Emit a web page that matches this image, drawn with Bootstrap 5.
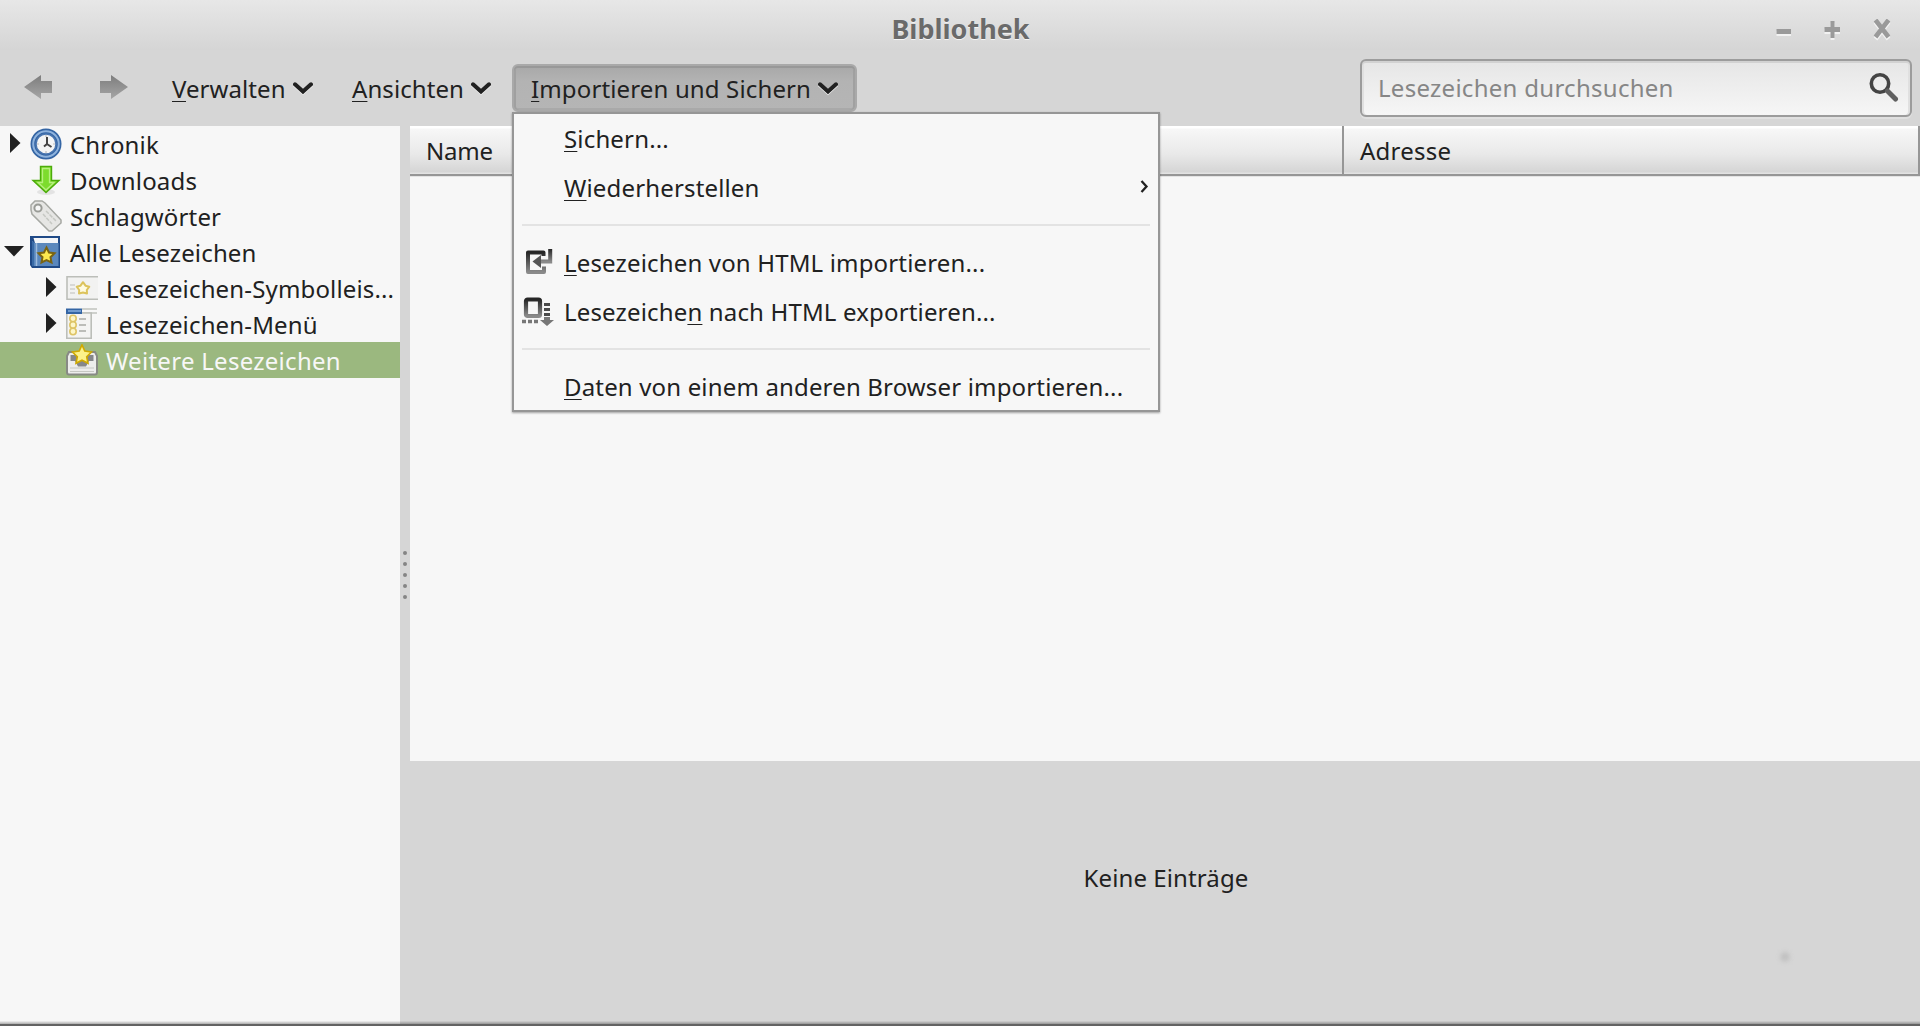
<!DOCTYPE html>
<html lang="de">
<head>
<meta charset="utf-8">
<title>Bibliothek</title>
<link href="https://cdn.jsdelivr.net/npm/bootstrap@5.3.0/dist/css/bootstrap.min.css" rel="stylesheet">
<style>
html,body{height:100%}
body{font-family:"Noto Sans","Open Sans",sans-serif;font-size:24px;line-height:36px;color:#212121;background:#d6d6d6;overflow:hidden}
svg{display:block;flex:none}
u{text-decoration:underline;text-decoration-thickness:1px;text-underline-offset:3px;text-decoration-skip-ink:none}
.titlebar{height:50px;background:linear-gradient(#e7e7e7,#d5d5d5);padding-left:52px;padding-right:29px}
.window-title{font-size:27px;font-weight:700;color:#6a6a6a;text-shadow:0 1px #f4f4f4;padding-top:11px;padding-left:94px}
.window-controls{gap:33px;padding-top:19px}
.window-controls svg{filter:drop-shadow(0 2px 0 #f2f2f2)}
.chev{filter:drop-shadow(0 1px 0 #eee)}
.toolbar{height:76px;padding:9px 8px 0 24px}
.nav-arrow{margin-top:16px}
.tool-btn{height:48px;margin-top:5px;border:0;border-radius:6px;padding:0;font-size:24px;line-height:36px;color:#212121;gap:7px;letter-spacing:.08px}
.tool-btn>span{padding-top:2px}
.tool-btn.active-menu{width:345px;padding-left:17px;letter-spacing:.14px;border:2px solid #a9a9a9;background:linear-gradient(#a8a8a8,#b3b3b3 35%,#b5b5b5);box-shadow:inset 0 2px #989898,inset 2px 0 #a0a0a0,inset -2px 0 #a0a0a0,inset 0 -2px #a9a9a9}
.searchbox{width:552px;height:58px;border:2px solid #9c9c9c;border-radius:6px;background:linear-gradient(#e6e6e6,#f6f6f6);box-shadow:inset 0 2px #d2d2d2,inset 2px 0 #e0e0e0,inset -2px 0 #e0e0e0,0 2px #e0e0e0;padding:0 11px 0 16px}
.searchbox input{font-size:24px;letter-spacing:.28px;color:#868686;background:none;border:0;padding:0;outline:0;line-height:36px}
.searchbox input::placeholder{color:#868686;opacity:1}
.sidebar{width:400px;background:#f7f7f7}
.tree-row{height:36px;padding-left:4px;white-space:nowrap;letter-spacing:.15px}
.tree-text{padding-top:2px}
.twisty{width:20px;margin:0 6px 2px 0;flex:none}
.tree-row.nested{padding-left:40px}
.tree-icon{width:32px;margin-right:8px}
.tree-row.chosen{background:#9bb87f;color:#f7f7f7;letter-spacing:.28px}
.splitter{width:10px;padding-top:425px;gap:7px}
.splitter i{width:4px;height:4px;border-radius:50%;background:#858585}
.listing{height:635px;background:#f7f7f7}
.list-head{height:50px;background:linear-gradient(#fff 2px,#f7f7f7 3px,#e9e9e9 28px,#d5d5d5 46px,#e2e2e2 47px);border-bottom:2px solid #969696;box-shadow:0 1px #e3e3e3;padding-bottom:1px}
.head-cell{height:48px;padding:7px 16px 5px;border-right:2px solid #969696}
.head-name{width:934px;letter-spacing:-.2px}
.head-url{letter-spacing:.25px}
.details-pane{position:relative}
.empty-note{padding:99px 0 0 2px;letter-spacing:.1px}
.resize-dot{position:absolute;left:1370px;top:191px;width:10px;height:10px;border-radius:50%;background:#c2c2c2;filter:blur(2px)}
.drop-panel{position:absolute;left:512px;top:112px;width:648px;height:300px;background:#f7f7f7;border:2px solid #969696;box-shadow:0 1px 2px rgba(0,0,0,.35);letter-spacing:.16px}
.drop-row{height:49px;padding:0 8px}
.drop-icon{width:32px;margin-right:10px;flex:none}
.drop-rule{height:2px;margin:12px 8px;background:#e3e3e3}
.window-edge{position:absolute;left:0;right:0;bottom:0;height:5px;background:linear-gradient(rgba(0,0,0,.02),rgba(0,0,0,.3) 3px,#636363 3px)}
</style>
<script src="https://cdn.jsdelivr.net/npm/bootstrap@5.3.0/dist/js/bootstrap.bundle.min.js"></script>
</head>
<body class="d-flex flex-column position-relative">
<svg width="0" height="0" class="position-absolute">
<defs>
<linearGradient id="gArrow" x2="0" y2="1"><stop stop-color="#7d7d7d"/><stop offset="1" stop-color="#a6a6a6"/></linearGradient>
<linearGradient id="gDark" x2="0" y2="1"><stop stop-color="#262626"/><stop offset="1" stop-color="#8a8a8a"/></linearGradient>
<symbol id="chevron" viewBox="0 0 20 13"><path d="M2 2.3 10 9.6 18 2.3" fill="none" stroke="#212121" stroke-width="4" stroke-linecap="round"/></symbol>
<symbol id="right" viewBox="0 0 20 20"><path d="M6 0 16.500 10 6 20Z" fill="#212121"/></symbol>
</defs></svg>

<header class="titlebar d-flex align-items-start">
<div class="window-title flex-grow-1 text-center">Bibliothek</div>
<div class="window-controls d-flex">
<svg width="16" height="20"><path d="M1.500 10H16V15H1.500Z" fill="#9a9a9a"/></svg>
<svg width="16" height="20"><path d="M6.500 2H10.500V8H16V13H10.500V19H6.500V13H.5V8H6.500Z" fill="#9a9a9a"/></svg>
<svg width="18" height="20"><path d="M2.500 1 15.500 18M15.500 1 2.500 18" stroke="#9a9a9a" stroke-width="4.600"/></svg>
</div>
</header>

<nav class="toolbar d-flex align-items-start">
<svg class="nav-arrow" width="28" height="24"><path d="M0 12 17 0V6H28V18H17V24Z" fill="url(#gArrow)"/></svg>
<svg class="nav-arrow" style="margin-left:48px" width="28" height="24"><path d="M28 12 11 0V6H0V18H11V24Z" fill="url(#gArrow)"/></svg>
<button class="tool-btn bg-transparent d-flex align-items-center" style="margin-left:44px;width:180px"><span><u>V</u>erwalten</span><svg class="chev" width="20" height="13"><use href="#chevron"/></svg></button>
<button class="tool-btn bg-transparent d-flex align-items-center" style="width:160px"><span><u>A</u>nsichten</span><svg class="chev" width="20" height="13"><use href="#chevron"/></svg></button>
<button class="tool-btn active-menu d-flex align-items-center"><span><u>I</u>mportieren und Sichern</span><svg class="chev" width="20" height="13"><use href="#chevron"/></svg></button>
<div class="searchbox d-flex align-items-center ms-auto">
<input class="flex-grow-1" type="text" placeholder="Lesezeichen durchsuchen">
<svg width="30" height="30"><circle cx="11" cy="10.500" r="8.700" fill="none" stroke="#444" stroke-width="3.600"/><path d="M18.500 18 26.500 26" stroke="#606060" stroke-width="5" stroke-linecap="round"/></svg>
</div>
</nav>

<main class="d-flex flex-grow-1">
<aside class="sidebar">
<div class="tree-row d-flex align-items-center"><svg class="twisty" height="20"><use href="#right"/></svg>
<svg class="tree-icon" width="32" height="32"><circle cx="16" cy="16" r="15.5" fill="#3465a4"/><circle cx="16" cy="16" r="12.8" fill="none" stroke="#8fb3dd" stroke-width="2"/><circle cx="16" cy="16" r="10" fill="#f4f5f5" stroke="#4a76b0" stroke-width="1.5"/><path d="M17 9V16L21.5 19M14 18.5 17 16" fill="none" stroke="#444" stroke-width="2"/><path d="M16 7V9M16 23V25M7 16H9M23 16H25" stroke="#bbb" stroke-width="1.2"/></svg><span class="tree-text">Chronik</span></div>
<div class="tree-row d-flex align-items-center"><span class="twisty"></span>
<svg class="tree-icon" width="32" height="32"><ellipse cx="16" cy="28" rx="9" ry="3" fill="#e3e3e3"/><path d="M10.5 2.5H21.5V16.5H29L16 28.5 3 16.5H10.5Z" fill="#7ddc2d" stroke="#4cab0b" stroke-width="1.4"/><path d="M12.5 4.5H19.5V18.5H24L16 26 8 18.5H12.5Z" fill="none" stroke="#b7f07f" stroke-width="1.3"/></svg><span class="tree-text">Downloads</span></div>
<div class="tree-row d-flex align-items-center"><span class="twisty"></span>
<svg class="tree-icon" width="32" height="32"><path d="M1 5 5 1H12L15 3 31 20V23L22 31H19L2 14 1 10Z" fill="#e6e6e4" stroke="#a6a8a3" stroke-width="1.5"/><circle cx="8" cy="8" r="3.6" fill="#f7f7f7" stroke="#999b96" stroke-width="2"/><path d="M13 14 22 24M16 11 26 21" stroke="#c6c8c3" stroke-width="1.5" stroke-dasharray="4 1"/></svg><span class="tree-text">Schlagwörter</span></div>
<div class="tree-row d-flex align-items-center"><svg class="twisty" height="20"><path d="M0 5H20L10 15.5Z" fill="#212121"/></svg>
<svg class="tree-icon" width="32" height="32"><path d="M0 0H30V32H2L0 29Z" fill="#204a87"/><path d="M3.5 2H28V7H5Z" fill="#f3f5f8"/><path d="M2 5 5 7H28.5V30H2Z" fill="#5b88bd"/><path d="M6.5 7V30" stroke="#9dbbdc" stroke-width="1.5"/><path d="M3 6V30" stroke="#396aa6" stroke-width="2"/><path d="M16.5 11.5 19 16.5 24.5 17.3 20.5 21.2 21.5 26.5 16.5 24 11.5 26.5 12.5 21.2 8.5 17.3 14 16.5Z" fill="#fce94f" stroke="#7a6413" stroke-width="2"/></svg><span class="tree-text">Alle Lesezeichen</span></div>
<div class="tree-row nested d-flex align-items-center"><svg class="twisty" height="20"><use href="#right"/></svg>
<svg class="tree-icon" width="32" height="32"><path d="M32 4.8H1V27.2H32" fill="#f2f2f1" stroke="#bcbeb9" stroke-width="1.6"/><path d="M4 13H9M4 17H9M4 21H9" stroke="#cfcfcd" stroke-width="1.4"/><path d="M17 10.200 19.500 13.700 23.300 14.700 20.800 18 21 21.500 17 20.500 13 21.500 13.200 18 10.700 14.700 14.500 13.700Z" fill="#fffbe0" stroke="#dcc35c" stroke-width="2" stroke-linejoin="round"/></svg><span class="tree-text">Lesezeichen-Symbolleis...</span></div>
<div class="tree-row nested d-flex align-items-center"><svg class="twisty" height="20"><use href="#right"/></svg>
<svg class="tree-icon" width="32" height="32"><path d="M16 1H31M16 5H31" stroke="#c1c3be" stroke-width="1.5"/><path d="M.8 5V30.2H25.2V5Z" fill="#f4f4f3" stroke="#bcbeb9" stroke-width="1.6"/><path d="M0 .5H16V6H0Z" fill="#3465a4"/><path d="M2 3H15" stroke="#709bd0" stroke-width="2"/><g fill="#fdf6c8" stroke="#dec466" stroke-width="1.6"><circle cx="7" cy="10.5" r="3.2"/><circle cx="7" cy="17" r="3.2"/><circle cx="7" cy="23.5" r="3.2"/></g><path d="M13 11H20M13 17H20M13 23H20" stroke="#a9aba6" stroke-width="1.5"/></svg><span class="tree-text">Lesezeichen-Menü</span></div>
<div class="tree-row nested chosen d-flex align-items-center"><span class="twisty"></span>
<svg class="tree-icon" width="32" height="32"><path d="M3 8H29L31 12V28Q31 30.500 29 30.500H3Q1 30.500 1 28V12Z" fill="#ededec" stroke="#888a85" stroke-width="2"/><path d="M4.500 11H27.500V17H23L20 22.500H12L9 17H4.500Z" fill="#85878a"/><path d="M4 24H28M4 27.500H28" stroke="#c6c8c3" stroke-width="1.2"/><path d="M16 .8 18.800 7 25.500 8 20.700 12.700 22 19.300 16 16.200 10 19.300 11.300 12.700 6.500 8 13.200 7Z" fill="#fcf28b" stroke="#cfa900" stroke-width="1.6"/></svg><span class="tree-text">Weitere Lesezeichen</span></div>
</aside>
<div class="splitter d-flex flex-column align-items-center"><i></i><i></i><i></i><i></i><i></i></div>
<section class="flex-grow-1 d-flex flex-column">
<div class="listing">
<div class="list-head d-flex"><div class="head-cell head-name">Name</div><div class="head-cell head-url flex-grow-1">Adresse</div></div>
</div>
<div class="details-pane flex-grow-1 text-center"><div class="empty-note">Keine Einträge</div><span class="resize-dot"></span></div>
</section>
</main>

<div class="drop-panel">
<div class="drop-row d-flex align-items-center"><span class="drop-icon"></span><span><u>S</u>ichern...</span></div>
<div class="drop-row d-flex align-items-center"><span class="drop-icon"></span><span><u>W</u>iederherstellen</span><svg class="ms-auto mb-1" width="10" height="14"><path d="M1.500 2 6.500 7.500 1.500 13" fill="none" stroke="#212121" stroke-width="2.300"/></svg></div>
<div class="drop-rule"></div>
<div class="drop-row d-flex align-items-center"><svg class="drop-icon" width="32" height="32"><g fill="none" stroke="url(#gDark)"><path d="M21.500 9V5.500H6V25H22V19.500" stroke-width="4" stroke-linejoin="round"/><path d="M28.200 2V14.500H18" stroke-width="4"/></g><path d="M10.500 14.500 19 8V21Z" fill="#555"/></svg><span><u>L</u>esezeichen von HTML importieren...</span></div>
<div class="drop-row d-flex align-items-center"><svg class="drop-icon" width="32" height="32"><rect x="4" y="3.500" width="14" height="16.500" rx="1.500" fill="none" stroke="url(#gDark)" stroke-width="4.200"/><path d="M0 25.500H4M6 25.500H10M12 25.500H16" stroke="#777" stroke-width="3.500"/><path d="M22 8.500H28M22 13.500H28M22 18.500H28" stroke="#4a4a4a" stroke-width="3"/><path d="M22 21H28V24H32L25 30 18 24H22Z" fill="#777"/></svg><span>Lesezeiche<u>n</u> nach HTML exportieren...</span></div>
<div class="drop-rule"></div>
<div class="drop-row d-flex align-items-center"><span class="drop-icon"></span><span><u>D</u>aten von einem anderen Browser importieren...</span></div>
</div>
<div class="window-edge"></div>
</body>
</html>
